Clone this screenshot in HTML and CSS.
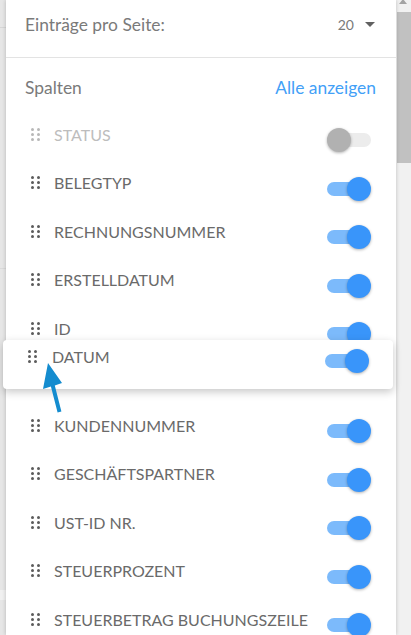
FILE: index.html
```html
<!DOCTYPE html>
<html>
<head>
  <meta name="viewport" content="width=device-width, initial-scale=1.0">
  <title>Spalten</title>
  <link rel="stylesheet" href="styles.css">
</head>
<body>
  <div class="screen">
    <div class="backdrop"></div>

    <div class="panel">
      <div class="per-page">
        <span class="per-page-label">Einträge pro Seite:</span>
        <span class="per-page-select">20 <span class="caret"></span></span>
      </div>

      <div class="columns-head">
        <span>Spalten</span>
        <a class="show-all">Alle anzeigen</a>
      </div>

      <ul class="column-list">
        <li class="column-row is-locked">
          <div class="column-name"><span class="handle"><i></i><i></i><i></i><i></i><i></i><i></i></span>Status</div>
          <span class="toggle"><span class="toggle-track"></span><span class="toggle-thumb"></span></span>
        </li>
        <li class="column-row">
          <div class="column-name"><span class="handle"><i></i><i></i><i></i><i></i><i></i><i></i></span>Belegtyp</div>
          <span class="toggle is-on"><span class="toggle-track"></span><span class="toggle-thumb"></span></span>
        </li>
        <li class="column-row">
          <div class="column-name"><span class="handle"><i></i><i></i><i></i><i></i><i></i><i></i></span>Rechnungsnummer</div>
          <span class="toggle is-on"><span class="toggle-track"></span><span class="toggle-thumb"></span></span>
        </li>
        <li class="column-row">
          <div class="column-name"><span class="handle"><i></i><i></i><i></i><i></i><i></i><i></i></span>Erstelldatum</div>
          <span class="toggle is-on"><span class="toggle-track"></span><span class="toggle-thumb"></span></span>
        </li>
        <li class="column-row">
          <div class="column-name"><span class="handle"><i></i><i></i><i></i><i></i><i></i><i></i></span>ID</div>
          <span class="toggle is-on"><span class="toggle-track"></span><span class="toggle-thumb"></span></span>
        </li>
        <!-- Platzhalter für die gerade gezogene Spalte -->
        <li class="column-row placeholder"></li>
        <li class="column-row">
          <div class="column-name"><span class="handle"><i></i><i></i><i></i><i></i><i></i><i></i></span>Kundennummer</div>
          <span class="toggle is-on"><span class="toggle-track"></span><span class="toggle-thumb"></span></span>
        </li>
        <li class="column-row">
          <div class="column-name"><span class="handle"><i></i><i></i><i></i><i></i><i></i><i></i></span>Geschäftspartner</div>
          <span class="toggle is-on"><span class="toggle-track"></span><span class="toggle-thumb"></span></span>
        </li>
        <li class="column-row">
          <div class="column-name"><span class="handle"><i></i><i></i><i></i><i></i><i></i><i></i></span>USt-ID Nr.</div>
          <span class="toggle is-on"><span class="toggle-track"></span><span class="toggle-thumb"></span></span>
        </li>
        <li class="column-row">
          <div class="column-name"><span class="handle"><i></i><i></i><i></i><i></i><i></i><i></i></span>Steuerprozent</div>
          <span class="toggle is-on"><span class="toggle-track"></span><span class="toggle-thumb"></span></span>
        </li>
        <li class="column-row">
          <div class="column-name"><span class="handle"><i></i><i></i><i></i><i></i><i></i><i></i></span>Steuerbetrag Buchungszeile</div>
          <span class="toggle is-on"><span class="toggle-track"></span><span class="toggle-thumb"></span></span>
        </li>
      </ul>
    </div>

    <div class="scrollbar">
      <div class="scroll-arrow"></div>
      <div class="scroll-thumb"></div>
    </div>

    <!-- gezogene Zeile -->
    <div class="column-row drag-ghost">
      <div class="column-name"><span class="handle"><i></i><i></i><i></i><i></i><i></i><i></i></span>Datum</div>
      <span class="toggle is-on"><span class="toggle-track"></span><span class="toggle-thumb"></span></span>
    </div>

    <svg class="pointer" width="411" height="635" viewBox="0 0 411 635">
      <polygon points="48,363 62,383 54.8,385.4 61.4,411.5 57.6,412.4 50.9,386.5 43,389" fill="#148ccf"/>
    </svg>
  </div>
</body>
</html>
```

FILE: styles.css
```css
body {
  margin: 0;
  font-family: Lato, "Open Sans", sans-serif;
}

.screen {
  position: relative;
  display: flex;
  width: 411px;
  height: 635px;
  overflow: hidden;
  background-color: #e9e9e9;
}

.backdrop {
  width: 6px;
  flex-shrink: 0;
  background:
    linear-gradient(#d6d6d6, #d6d6d6) 0 27px / 100% 1px no-repeat,
    linear-gradient(#dadada, #dadada) 0 268px / 100% 1px no-repeat,
    linear-gradient(#f0f0f0, #f0f0f0) 0 590px / 100% 10px no-repeat,
    #e6e6e6;
}

.panel {
  width: 390px;
  flex-shrink: 0;
  background-color: #fff;
  box-shadow: 0 0 4px rgba(0, 0, 0, 0.22);
  position: relative;
  z-index: 1;
}

.per-page {
  display: flex;
  align-items: center;
  justify-content: space-between;
  box-sizing: border-box;
  height: 58px;
  padding: 0 21px 9px 19px;
  border-bottom: 1px solid #e3e3e3;
  font-size: 17.4px;
  color: #7a7a7a;
}

.per-page-select {
  display: flex;
  align-items: center;
  font-size: 14px;
}

.caret {
  width: 0;
  height: 0;
  margin-left: 11px;
  border-left: 5.5px solid transparent;
  border-right: 5.5px solid transparent;
  border-top: 5.5px solid #616161;
}

.columns-head {
  display: flex;
  align-items: center;
  justify-content: space-between;
  height: 58px;
  padding: 0 20px 0 19px;
  font-size: 17.4px;
  color: #7a7a7a;
}

.show-all {
  color: #42a0f7;
  cursor: pointer;
}

.column-list {
  list-style: none;
  margin: 0;
  padding: 0;
}

.column-row {
  display: flex;
  align-items: center;
  justify-content: space-between;
  box-sizing: border-box;
  height: 48.5px;
  padding: 0 25px;
  font-size: 16px;
  color: #6a6a6a;
  text-transform: uppercase;
}

.column-name {
  display: flex;
  align-items: center;
  margin-bottom: 12px;
}

.handle {
  display: grid;
  grid-template-columns: 3px 3px;
  grid-template-rows: 3px 3px 3px;
  column-gap: 3px;
  row-gap: 2px;
  margin-right: 14px;
}

.handle i {
  display: block;
  border-radius: 50%;
  background-color: #5c5c5c;
}

.is-locked {
  color: #bdbdbd;
}

.is-locked .handle i {
  background-color: #b8b8b8;
}

/* Schalter */
.toggle {
  position: relative;
  width: 44px;
  height: 24px;
}

.toggle-track {
  position: absolute;
  left: 0;
  right: 0;
  top: 5px;
  height: 14px;
  border-radius: 7px;
  background-color: #ececec;
}

.toggle-thumb {
  position: absolute;
  left: 0;
  top: 0;
  width: 24px;
  height: 24px;
  border-radius: 50%;
  background-color: #b1b1b1;
  box-shadow: 0 1px 3px rgba(0, 0, 0, 0.3);
}

.toggle.is-on .toggle-track {
  right: 4px;
  background-color: #7cbafb;
}

.toggle.is-on .toggle-thumb {
  left: auto;
  right: 0;
  background-color: #3995fa;
}

.drag-ghost {
  position: absolute;
  left: 3px;
  top: 340px;
  z-index: 3;
  width: 390px;
  height: 49px;
  padding: 0 24px 0 25px;
  background-color: #fff;
  border-radius: 4px;
  box-shadow: 0 3px 8px rgba(0, 0, 0, 0.22);
}

.drag-ghost .column-name {
  margin-bottom: 17px;
}

.drag-ghost .handle {
  margin-right: 15px;
}

.drag-ghost .toggle {
  margin-bottom: 7px;
}

.pointer {
  position: absolute;
  left: 0;
  top: 0;
  z-index: 4;
  pointer-events: none;
}

/* Scrollleiste */
.scrollbar {
  position: relative;
  width: 15px;
  flex-shrink: 0;
  background-color: #f1f1f1;
}

.scroll-arrow {
  position: absolute;
  left: 3px;
  top: -1px;
  border-left: 4px solid transparent;
  border-right: 4px solid transparent;
  border-bottom: 5px solid #a3a3a3;
}

.scroll-thumb {
  position: absolute;
  left: 1px;
  right: 0;
  top: 12px;
  height: 151px;
  background-color: #c1c1c1;
}
```
